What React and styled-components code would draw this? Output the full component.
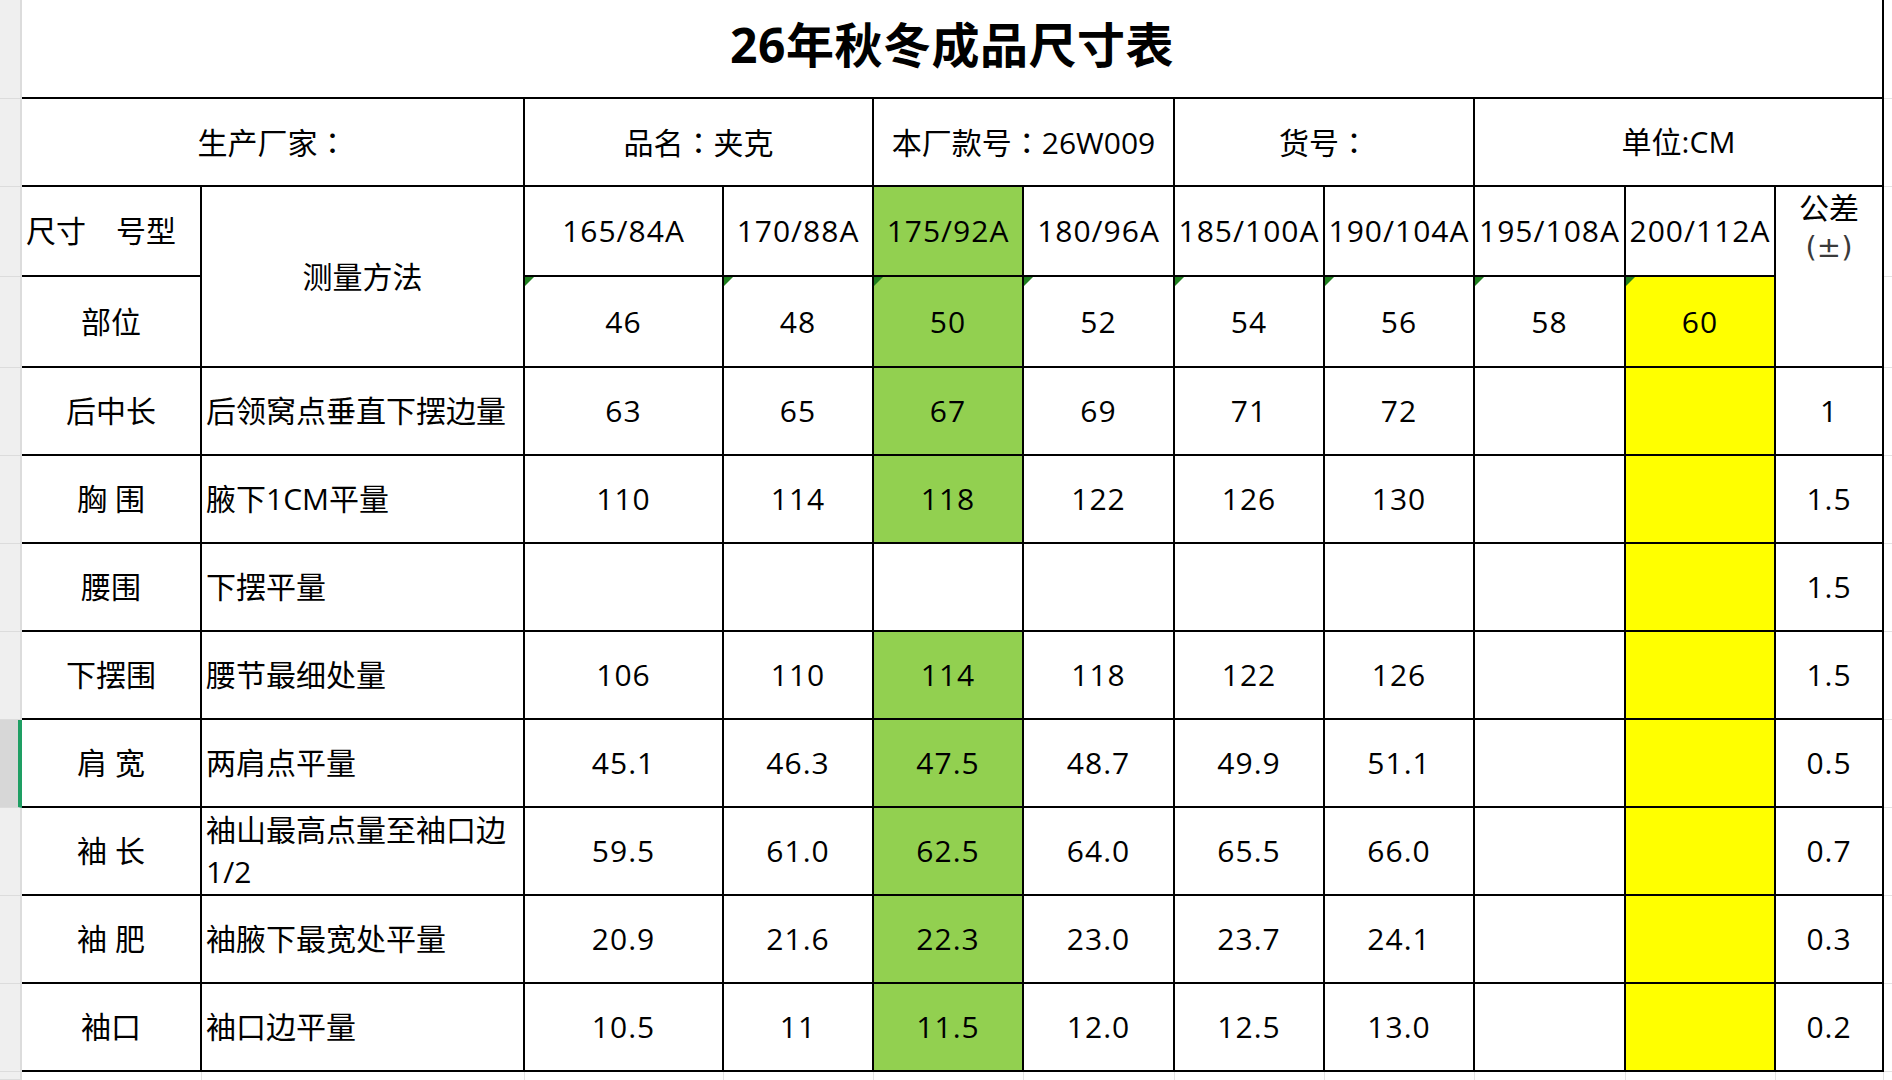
import React from "react";
import styled, { createGlobalStyle, css } from "styled-components";

const GlobalStyle = createGlobalStyle`
  html, body {
    margin: 0;
    padding: 0;
    background: #fff;
  }
  body {
    font-family: "Open Sans", "Noto Sans CJK SC", sans-serif;
    overflow: hidden;
  }
`;

const SIZES = ["165/84A", "170/88A", "175/92A", "180/96A", "185/100A", "190/104A", "195/108A", "200/112A"];
const CHEST = ["46", "48", "50", "52", "54", "56", "58", "60"];
const BLANK = ["", ""];

const ROWS = [
  { part: "后中长", method: ["后领窝点垂直下摆边量"], values: ["63", "65", "67", "69", "71", "72", ...BLANK], tol: "1" },
  { part: "胸 围", method: ["腋下1CM平量"], values: ["110", "114", "118", "122", "126", "130", ...BLANK], tol: "1.5" },
  { part: "腰围", method: ["下摆平量"], values: ["", "", "", "", "", "", ...BLANK], tol: "1.5" },
  { part: "下摆围", method: ["腰节最细处量"], values: ["106", "110", "114", "118", "122", "126", ...BLANK], tol: "1.5" },
  { part: "肩 宽", method: ["两肩点平量"], values: ["45.1", "46.3", "47.5", "48.7", "49.9", "51.1", ...BLANK], tol: "0.5", selected: true },
  { part: "袖 长", method: ["袖山最高点量至袖口边", "1/2"], values: ["59.5", "61.0", "62.5", "64.0", "65.5", "66.0", ...BLANK], tol: "0.7" },
  { part: "袖 肥", method: ["袖腋下最宽处平量"], values: ["20.9", "21.6", "22.3", "23.0", "23.7", "24.1", ...BLANK], tol: "0.3" },
  { part: "袖口", method: ["袖口边平量"], values: ["10.5", "11", "11.5", "12.0", "12.5", "13.0", ...BLANK], tol: "0.2" },
];

const FILLS = { green: "#92d050", yellow: "#ffff00" };

// 175/92A column is green where it has a value, 200/112A is yellow below the size row
const fillFor = (kind, i, value) => {
  if (i === 2 && value !== "") return "green";
  if (i === 7 && kind !== "size") return "yellow";
  return null;
};

const Sheet = styled.div`
  display: grid;
  grid-template-columns: 22px 180px 323px 199px 150px 150px 151px 150px 150px 151px 150px 108px 1fr;
  grid-template-rows: 99px 88px 90px 91px repeat(8, 88px) 1fr;
  width: 1892px;
  height: 1080px;
  font-size: 30px;
  color: #000;
`;

const RowHead = styled.div`
  background: ${(p) => (p.$selected ? "#d7d7d7" : "#efefef")};
  border-bottom: 1px solid #dcdcdc;
  border-right: ${(p) => (p.$selected ? "4px solid #1e9e63" : "2px solid #dcdcdc")};
`;

const Spill = styled.div`
  border-bottom: 1px solid #e2e2e2;
`;

const BottomSpill = styled.div`
  border-right: 1px solid #e2e2e2;
`;

const Title = styled.div`
  grid-column: span 11;
  display: flex;
  align-items: center;
  justify-content: center;
  padding-bottom: 14px;
  border-right: 2px solid #000;
  border-bottom: 2px solid #000;
  font-size: 48px;
  font-weight: 700;
  letter-spacing: 0.5px;
`;

const Cell = styled.div`
  grid-column: span ${(p) => p.$span || 1};
  grid-row: span ${(p) => p.$rows || 1};
  position: relative;
  display: flex;
  flex-direction: column;
  justify-content: ${(p) => (p.$top ? "flex-start" : "center")};
  align-items: ${(p) => (p.$left ? "flex-start" : "center")};
  padding: 0 0 0 ${(p) => (p.$left ? "4px" : "0")};
  border-right: 2px solid #000;
  border-bottom: 2px solid #000;
  background: ${(p) => (p.$fill ? FILLS[p.$fill] : "#fff")};
  line-height: 42px;
  letter-spacing: ${(p) => (p.$num ? "1px" : "0")};
  white-space: nowrap;
  ${(p) =>
    p.$flag &&
    css`
      &::before {
        content: "";
        position: absolute;
        top: 0;
        left: 0;
        border-top: 9px solid #1f7f1f;
        border-right: 9px solid transparent;
      }
    `}
`;

/* full-width colon sits centred in the reference, as in the TC forms */
const Colon = styled.span`
  font-family: "Noto Sans CJK TC", sans-serif;
`;

const PlusMinus = styled.span`
  font-family: "DejaVu Sans", sans-serif;
  font-size: 29px;
  line-height: 36px;
  color: #3a3a3a;
`;

const App = () => {
  return (
    <>
      <GlobalStyle />
      <Sheet>
        <RowHead />
        <Title>26年秋冬成品尺寸表</Title>
        <Spill />

        <RowHead />
        <Cell $span={2}>
          <span>
            生产厂家<Colon>：</Colon>
          </span>
        </Cell>
        <Cell $span={2}>
          <span>
            品名<Colon>：</Colon>夹克
          </span>
        </Cell>
        <Cell $span={2}>
          <span>
            本厂款号<Colon>：</Colon>26W009
          </span>
        </Cell>
        <Cell $span={2}>
          <span>
            货号<Colon>：</Colon>
          </span>
        </Cell>
        <Cell $span={3}>单位:CM</Cell>
        <Spill />

        <RowHead />
        <Cell $left>尺寸　号型</Cell>
        <Cell $rows={2}>测量方法</Cell>
        {SIZES.map((s, i) => (
          <Cell key={s} $num $fill={fillFor("size", i, s)}>
            {s}
          </Cell>
        ))}
        <Cell $rows={2} $top>
          <span>公差</span>
          <PlusMinus>(±)</PlusMinus>
        </Cell>
        <Spill />

        <RowHead />
        <Cell>部位</Cell>
        {CHEST.map((c, i) => (
          <Cell key={c} $num $flag $fill={fillFor("chest", i, c)}>
            {c}
          </Cell>
        ))}
        <Spill />

        {ROWS.map((row) => (
          <React.Fragment key={row.part}>
            <RowHead $selected={row.selected} />
            <Cell>{row.part}</Cell>
            <Cell $left>
              {row.method.map((line) => (
                <span key={line}>{line}</span>
              ))}
            </Cell>
            {row.values.map((v, i) => (
              <Cell key={i} $num $fill={fillFor("data", i, v)}>
                {v}
              </Cell>
            ))}
            <Cell $num>{row.tol}</Cell>
            <Spill />
          </React.Fragment>
        ))}

        <RowHead />
        {Array.from({ length: 11 }, (_, i) => (
          <BottomSpill key={i} />
        ))}
        <div />
      </Sheet>
    </>
  );
};

export default App;
